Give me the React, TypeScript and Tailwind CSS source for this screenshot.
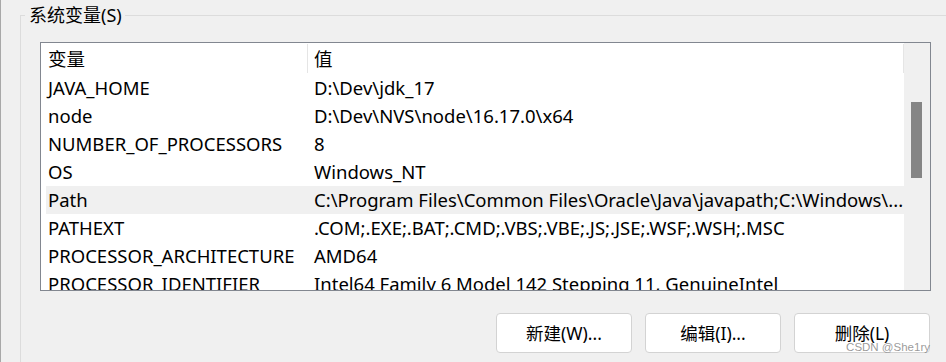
const rows: [string, string][] = [
  ['JAVA_HOME', 'D:\\Dev\\jdk_17'],
  ['node', 'D:\\Dev\\NVS\\node\\16.17.0\\x64'],
  ['NUMBER_OF_PROCESSORS', '8'],
  ['OS', 'Windows_NT'],
  ['Path', 'C:\\Program Files\\Common Files\\Oracle\\Java\\javapath;C:\\Windows\\...'],
  ['PATHEXT', '.COM;.EXE;.BAT;.CMD;.VBS;.VBE;.JS;.JSE;.WSF;.WSH;.MSC'],
  ['PROCESSOR_ARCHITECTURE', 'AMD64'],
  ['PROCESSOR_IDENTIFIER', 'Intel64 Family 6 Model 142 Stepping 11, GenuineIntel'],
];

function Button({ label }: { label: string }) {
  return (
    <button className="w-[136px] h-[40px] bg-white border border-[#d3d3d3] rounded-[4px] text-[17.5px] text-black flex items-center justify-center">
      {label}
    </button>
  );
}

export default function App() {
  return (
    <div className="relative w-[946px] h-[362px] bg-[#f0f0f0] flex overflow-hidden text-black font-['Noto_Sans','Noto_Sans_CJK_SC',sans-serif]">
      {/* window edge */}
      <div className="w-px bg-[#a8a8a8]" />

      <div className="flex-1 pl-[19px] pt-[15px]">
        {/* Group box */}
        <div className="relative h-full border-l border-t border-[#dcdcdc] pl-[19px] pt-[26px]">
          <span className="absolute left-[4px] top-[-13px] pl-[4px] pr-[3px] bg-[#f0f0f0] text-[18px] leading-[24px] whitespace-nowrap">
            系统变量(S)
          </span>

          {/* List view */}
          <div className="w-[891px] h-[249px] border border-[#828790] bg-white flex">
            <div className="flex-1 overflow-hidden pl-[5px] text-[18.5px]">
              <div className="flex h-[31px]">
                <div className="w-[261px] pl-[2px] flex items-center">变量</div>
                <div className="flex-1 my-[1px] border-l border-r border-[#e5e5e5] pl-[6px] flex items-center">值</div>
              </div>
              {rows.map(([name, value]) => (
                <div
                  key={name}
                  className={`flex h-[28px] shrink-0 items-center leading-[28px] ${name === 'Path' ? 'bg-[#f0f0f0]' : ''}`}
                >
                  <div className="w-[261px] shrink-0 pl-[2px] whitespace-nowrap overflow-hidden">{name}</div>
                  <div className="flex-1 pl-[7px] whitespace-nowrap overflow-hidden">{value}</div>
                </div>
              ))}
            </div>
            {/* scrollbar */}
            <div className="w-[26px] bg-[#f0f0f0] pt-[59px] pl-[7px]">
              <div className="w-[11px] h-[76px] bg-[#858585]" />
            </div>
          </div>

          {/* Buttons */}
          <div className="mt-[22px] w-[890px] flex justify-end gap-[13px]">
            <Button label="新建(W)..." />
            <Button label="编辑(I)..." />
            <Button label="删除(L)" />
          </div>
        </div>
      </div>

      <span className="absolute right-[16px] bottom-[9px] text-[11.5px] leading-none text-[rgba(120,120,120,0.75)] font-['Liberation_Sans',sans-serif] whitespace-nowrap">
        CSDN @She1ry
      </span>
    </div>
  );
}
